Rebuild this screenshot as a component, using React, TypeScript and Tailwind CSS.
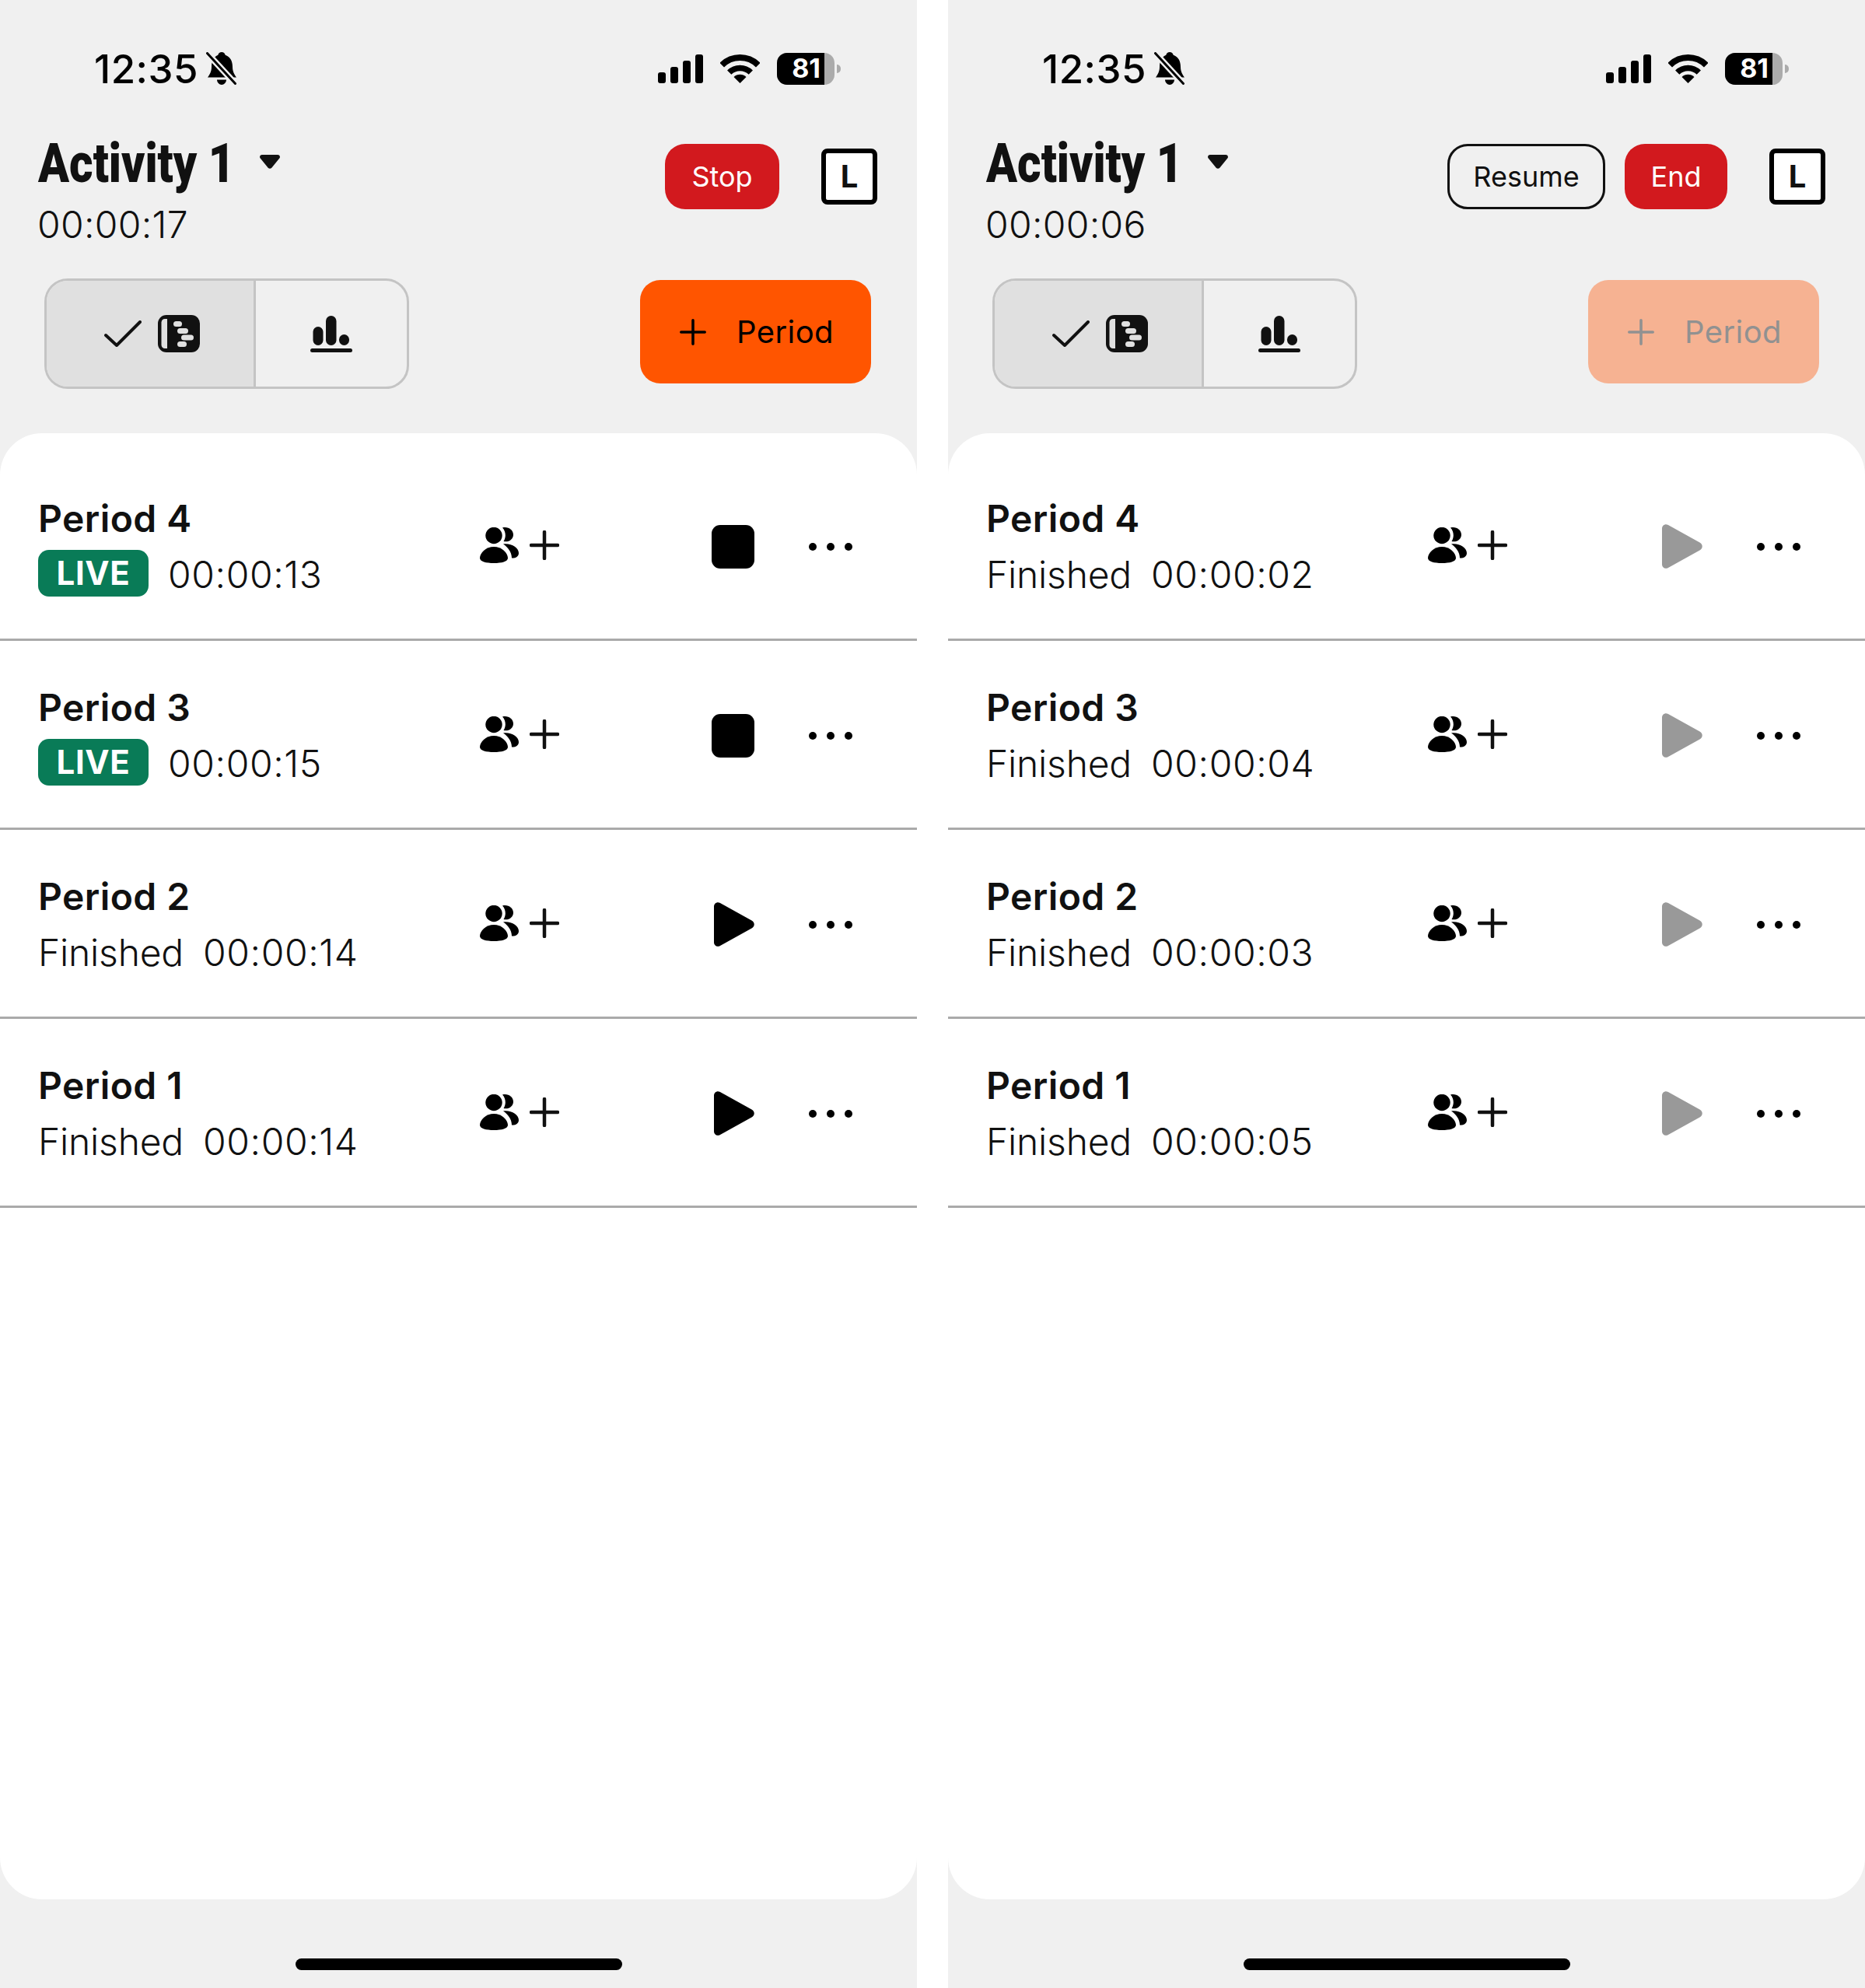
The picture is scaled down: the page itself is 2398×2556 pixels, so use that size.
import React from 'react';

interface PeriodData {
  name: string;
  status: 'live' | 'finished';
  time: string;
}

interface PanelData {
  elapsed: string;
  paused: boolean;
  periods: PeriodData[];
}

const panels: PanelData[] = [
  {
    elapsed: '00:00:17',
    paused: false,
    periods: [
      { name: 'Period 4', status: 'live', time: '00:00:13' },
      { name: 'Period 3', status: 'live', time: '00:00:15' },
      { name: 'Period 2', status: 'finished', time: '00:00:14' },
      { name: 'Period 1', status: 'finished', time: '00:00:14' },
    ],
  },
  {
    elapsed: '00:00:06',
    paused: true,
    periods: [
      { name: 'Period 4', status: 'finished', time: '00:00:02' },
      { name: 'Period 3', status: 'finished', time: '00:00:04' },
      { name: 'Period 2', status: 'finished', time: '00:00:03' },
      { name: 'Period 1', status: 'finished', time: '00:00:05' },
    ],
  },
];

const BellSlash = () => (
  <svg width="39" height="42" viewBox="0 0 39 42" className="block">
    <path d="M20 0c2.4 0 4.2 1.6 4.7 3.8C30.800 5.800 34 11.500 34 19c0 6 2.500 10 5 13.500H2c2.500-3.500 5-7.500 5-13.500C7 11.500 10 5.800 15.300 3.800 15.800 1.600 17.600 0 20 0Z" fill="#000" />
    <path d="M14 35.500h12c0 3.500-2.800 6.500-6 6.500s-6-3-6-6.500Z" fill="#000" />
    <path d="M1 1 38 41" stroke="#f0f0f0" strokeWidth="8" />
    <path d="M1.500 1.500 37.500 40.500" stroke="#000" strokeWidth="3" strokeLinecap="round" />
  </svg>
);

const SignalIcon = () => (
  <svg width="58" height="37" viewBox="0 0 58 37" className="block">
    <rect x="0" y="23" width="10" height="14" rx="3" fill="#000" />
    <rect x="16" y="16" width="10" height="21" rx="3" fill="#000" />
    <rect x="32" y="8" width="10" height="29" rx="3" fill="#000" />
    <rect x="48" y="0" width="10" height="37" rx="3" fill="#000" />
  </svg>
);

const WifiIcon = () => (
  <svg width="51" height="37" viewBox="0 0 51 37" className="block">
    <path d="M2.200 13.700A33 33 0 0 1 48.800 13.700" fill="none" stroke="#000" strokeWidth="8" />
    <path d="M11.700 23.200A19.500 19.500 0 0 1 39.300 23.200" fill="none" stroke="#000" strokeWidth="7.500" />
    <path d="M25.500 37 17.500 29A11.500 11.500 0 0 1 33.500 29Z" fill="#000" />
  </svg>
);

const Battery = () => (
  <div className="flex items-center gap-[3px]">
    <div className="flex h-[41px] w-[74px] overflow-hidden rounded-[13px] bg-[#ababab]">
      <div className="flex w-[61px] items-center justify-end bg-black pr-[5px] font-['Inter',sans-serif] text-[34px] font-bold leading-none text-white">
        81
      </div>
    </div>
    <div className="h-[11px] w-[5px] rounded-r-full bg-[#ababab]" />
  </div>
);

const StatusBar = () => (
  <div className="mt-[64px] flex h-[48px] items-center justify-between pl-[121px] pr-[98px]">
    <div className="flex items-center gap-[10px]">
      <span className="font-['Inter',sans-serif] text-[51px] font-medium leading-none tracking-[0.5px] text-black">12:35</span>
      <BellSlash />
    </div>
    <div className="flex items-center gap-[22px]">
      <SignalIcon />
      <WifiIcon />
      <Battery />
    </div>
  </div>
);

const PlusIcon = ({ size, color, width }: { size: number; color: string; width: number }) => (
  <svg width={size} height={size} viewBox="0 0 38 38" className="block">
    <path d="M19 2V36M2 19H36" fill="none" stroke={color} strokeWidth={width} strokeLinecap="round" />
  </svg>
);

const LargeTextBox = () => (
  <div className="flex h-[72px] w-[72px] items-center justify-center rounded-[8px] border-[6px] border-black bg-white font-['Inter',sans-serif] text-[40px] font-bold leading-none text-[#111]">
    L
  </div>
);

const Header = ({ elapsed, paused }: { elapsed: string; paused: boolean }) => (
  <div className="mt-[63px] flex h-[184px] items-start justify-between pl-[49px] pr-[51px]">
    <div className="flex flex-col">
      <div className="flex h-[70px] items-center">
        <span className="origin-left scale-x-[0.84] whitespace-nowrap font-['Roboto',sans-serif] text-[70px] font-black leading-none text-[#111]">
          Activity 1
        </span>
        <svg width="26" height="18" viewBox="0 0 26 18" className="absolute left-[334px] top-[199px]">
          <path d="M3 0H23C25.500 0 26.800 2.500 25.300 4.500L15.500 16.500C14 18.300 12 18.300 10.500 16.500L.7 4.500C-.8 2.500.5 0 3 0Z" fill="#111" />
        </svg>
      </div>
      <span className="ml-[-1px] mt-[15px] font-['Inter',sans-serif] text-[48px] font-[350] leading-[58px] tracking-[0.3px] text-[#111]">{elapsed}</span>
    </div>
    <div className="mt-[10px] flex items-center">
      {paused && (
        <button className="mr-[25px] flex h-[84px] w-[203px] items-center justify-center rounded-[26px] border-[3px] border-[#111] font-['Inter',sans-serif] text-[36px] text-[#111]">
          Resume
        </button>
      )}
      <button
        className={`flex h-[84px] items-center justify-center rounded-[26px] bg-[#d2191e] font-['Inter',sans-serif] text-[36px] text-white ${
          paused ? 'w-[132px]' : 'w-[147px]'
        }`}
      >
        {paused ? 'End' : 'Stop'}
      </button>
      <div className="ml-[54px]">
        <LargeTextBox />
      </div>
    </div>
  </div>
);

const CheckIcon = () => (
  <svg width="48" height="34" viewBox="0 0 48 34" className="block">
    <path d="M2 19 16 32 46 2" fill="none" stroke="#111" strokeWidth="4" strokeLinecap="round" strokeLinejoin="round" />
  </svg>
);

const TimelineIcon = () => (
  <svg width="54" height="48" viewBox="0 0 54 48" className="block">
    <rect width="54" height="48" rx="11" fill="#111" />
    <path d="M12 5H9C6.500 5 4.500 7 4.500 9.500V38.500C4.500 41 6.500 43 9 43H12Z" fill="#e0e0e0" />
    <rect x="20" y="8" width="11" height="7" rx="3.500" fill="#e0e0e0" />
    <rect x="25" y="17" width="14" height="7" rx="3.500" fill="#e0e0e0" />
    <rect x="30" y="25.500" width="16" height="7" rx="3.500" fill="#e0e0e0" />
    <rect x="25" y="34" width="12" height="7" rx="3.500" fill="#e0e0e0" />
  </svg>
);

const ChartIcon = () => (
  <svg width="54" height="47" viewBox="0 0 54 47" className="block">
    <rect x="3.500" y="14" width="13" height="24" rx="6.500" fill="#111" />
    <rect x="20" y="0" width="13.500" height="38" rx="6.700" fill="#111" />
    <rect x="37" y="24" width="13" height="14" rx="6.500" fill="#111" />
    <rect x="0" y="42" width="54" height="5" rx="2.500" fill="#111" />
  </svg>
);

const Toolbar = ({ paused }: { paused: boolean }) => (
  <div className="mt-[-1px] flex items-start pl-[57px] pr-[59px]">
    <div className="flex h-[142px] w-[469px] overflow-hidden rounded-[30px] border-[3px] border-[#c4c4c4]">
      <div className="flex w-[269px] items-center justify-center gap-[21px] border-r-[3px] border-[#c4c4c4] bg-[#e0e0e0] pl-[5px]">
        <CheckIcon />
        <TimelineIcon />
      </div>
      <div className="flex flex-1 items-center justify-center">
        <ChartIcon />
      </div>
    </div>
    <button
      className={`ml-auto mt-[2px] flex h-[133px] w-[297px] items-center justify-center gap-[39px] rounded-[26px] pl-[3px] font-['Inter',sans-serif] text-[40px] tracking-[0.4px] ${
        paused ? 'bg-[#f6b292] text-[#919191]' : 'bg-[#ff5500] text-black'
      }`}
    >
      <PlusIcon size={34} color={paused ? '#919191' : '#000'} width={4} />
      Period
    </button>
  </div>
);

const UsersIcon = () => (
  <svg width="50" height="46" viewBox="0 0 50 46" className="block">
    <circle cx="18" cy="10.500" r="10.700" fill="#000" />
    <path d="M18 25C28 25 36 33 36 39.500 36 44 28 46 18 46 8 46 0 44 0 39.500 0 33 8 25 18 25Z" fill="#000" />
    <path d="M29 .5C36-1.500 43 3 43 9.500 43 15.500 37 19.500 30.500 18 34 13 33.500 5 29 .5Z" fill="#000" />
    <path d="M30 21.500C40 20 50 26 50 33 50 38 45 40 41 39.500 41 32 36 25.500 30 21.500Z" fill="#000" />
  </svg>
);

const PlayIcon = ({ color }: { color: string }) => (
  <svg width="52" height="57" viewBox="0 0 52 57" className="block">
    <path d="M0 5.500C0 1.500 4-1 7.500.8L48.500 23.500C52.800 25.800 52.800 31.200 48.500 33.500L7.500 56.200C4 58 0 55.500 0 51.500Z" fill={color} />
  </svg>
);

const PeriodRow = ({ period, paused }: { period: PeriodData; paused: boolean }) => (
  <div className="grid h-[243px] grid-cols-[568px_298px_125px_auto] items-center border-b-[3px] border-[#aaaaaa] pl-[49px] pt-[3px]">
    <div className="flex flex-col font-['Inter',sans-serif] text-[#111]">
      <span className="pt-[1px] text-[48px] font-semibold leading-[58px] tracking-[0.4px]">{period.name}</span>
      <div className="mt-[13px] flex h-[60px] items-center text-[48px] font-[350] leading-none">
        {period.status === 'live' ? (
          <span className="mb-[3px] mr-[25px] flex h-[60px] w-[142px] items-center justify-center rounded-[14px] bg-[#097b57] text-[42px] font-bold tracking-[0.6px] text-white">
            LIVE
          </span>
        ) : (
          <span className="mr-[25px] tracking-[-0.2px]">Finished</span>
        )}
        <span className="tracking-[0.6px]">{period.time}</span>
      </div>
    </div>
    <div className="mb-[4px] flex items-center gap-[14px]">
      <UsersIcon />
      <PlusIcon size={38} color="#111" width={4.500} />
    </div>
    {period.status === 'live' ? (
      <div className="h-[56px] w-[55px] rounded-[11px] bg-black" />
    ) : (
      <div className="pl-[3px]">
        <PlayIcon color={paused ? '#999999' : '#000'} />
      </div>
    )}
    <div className="flex items-center gap-[13px]">
      <div className="h-[10px] w-[10px] rounded-full bg-black" />
      <div className="h-[10px] w-[10px] rounded-full bg-black" />
      <div className="h-[10px] w-[10px] rounded-full bg-black" />
    </div>
  </div>
);

const Panel = ({ data }: { data: PanelData }) => (
  <div className="relative flex h-[2556px] w-[1179px] flex-col bg-[#f0f0f0]">
    <StatusBar />
    <Header elapsed={data.elapsed} paused={data.paused} />
    <Toolbar paused={data.paused} />
    <div className="mt-[57px] h-[1885px] rounded-[54px] bg-white pt-[24px]">
      {data.periods.map((period) => (
        <PeriodRow key={period.name} period={period} paused={data.paused} />
      ))}
    </div>
    <div className="mx-auto mt-[76px] h-[15px] w-[420px] rounded-full bg-black" />
  </div>
);

export default function App() {
  return (
    <div className="flex w-[2398px] gap-[40px] bg-white">
      {panels.map((panel) => (
        <Panel key={panel.elapsed} data={panel} />
      ))}
    </div>
  );
}
